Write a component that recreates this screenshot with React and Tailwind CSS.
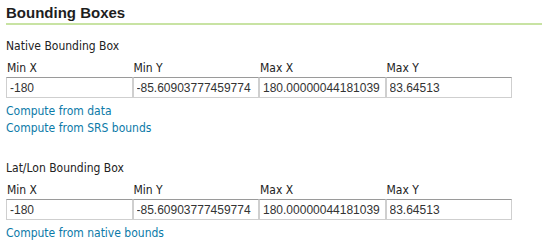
const SECTIONS = [
  {
    title: "Native Bounding Box",
    links: ["Compute from data", "Compute from SRS bounds"],
  },
  {
    title: "Lat/Lon Bounding Box",
    links: ["Compute from native bounds"],
  },
];

const FIELDS = [
  { label: "Min X", value: "-180" },
  { label: "Min Y", value: "-85.60903777459774" },
  { label: "Max X", value: "180.00000044181039" },
  { label: "Max Y", value: "83.64513" },
];

function BoxSection({ title, links }) {
  return (
    <div className="mb-[22px]">
      <div className="h-[18px] leading-[18px] text-[#222]">{title}</div>
      <div className="flex mt-[4px]">
        {FIELDS.map((f) => (
          <div key={f.label} className="w-[126.5px] shrink-0">
            <div className="h-[18px] leading-[18px] pl-[1px] text-[#222]">{f.label}</div>
            <input
              readOnly
              value={f.value}
              className="block w-full h-[21px] px-[3px] border border-[#cfcfcf] border-t-[#9a9a9a] bg-white text-[12px] text-[#333] outline-none"
              style={{ fontFamily: '"Liberation Sans", Arial, sans-serif' }}
            />
          </div>
        ))}
      </div>
      <div className="mt-[5px]">
        {links.map((l) => (
          <a key={l} href="#" className="block h-[17px] leading-[17px] text-[#0b7aa8]">
            {l}
          </a>
        ))}
      </div>
    </div>
  );
}

export default function App() {
  return (
    <div
      className="w-[542px] h-[251px] bg-white pl-[6px] pt-[3px] text-[12px] overflow-hidden"
      style={{ fontFamily: '"DejaVu Sans Condensed", "DejaVu Sans", sans-serif' }}
    >
      <h2
        className="text-[15px] font-bold leading-[20px] text-[#1e1e1e]"
        style={{ fontFamily: '"Liberation Sans", Arial, sans-serif' }}
      >
        Bounding Boxes
      </h2>
      <div className="h-[2px] bg-[#c8e3a3] mt-[0px] mb-[12px]" />
      {SECTIONS.map((s) => (
        <BoxSection key={s.title} {...s} />
      ))}
    </div>
  );
}
